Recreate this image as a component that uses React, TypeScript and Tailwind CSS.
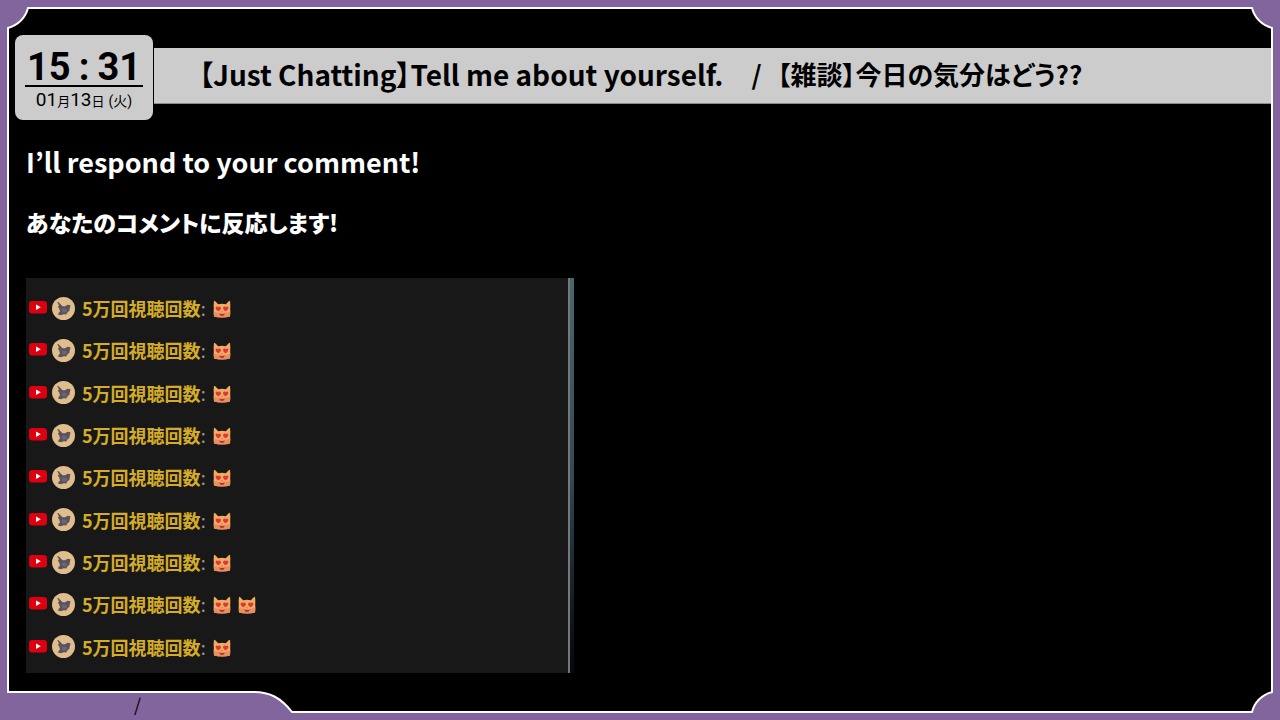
import type { ReactNode } from 'react'

type Message = {
  id: number
  author: string
  emotes: number
}

const MESSAGES: Message[] = [1, 1, 1, 1, 1, 1, 1, 2, 1].map((emotes, id) => ({
  id,
  author: '5万回視聴回数',
  emotes,
}))

export default function App() {
  return (
    <div className="relative flex min-h-screen flex-col bg-[#83659e] p-[7px] font-['Noto_Sans_CJK_JP',sans-serif]">
      <main className="flex flex-1 flex-col border-2 border-white bg-black pt-[26px] pb-[38px]">
        <header className="flex items-start pl-[6px]">
          <Clock />
          <Title />
        </header>

        <section className="flex flex-col gap-5 pt-[22px] pl-[17px] text-white">
          <p className="text-[27px] leading-10 font-bold">I’ll respond to your comment!</p>
          <p className="text-[23px] leading-10 font-black [font-feature-settings:'palt']">
            あなたのコメントに反応します!
          </p>
        </section>

        <ChatPanel />
      </main>

      <FrameCorners />
    </div>
  )
}

function Clock() {
  return (
    <div className="flex h-[85px] w-[138px] shrink-0 flex-col items-center rounded-lg bg-[#cccccc] px-[10px] pt-[14px] font-['Roboto','Noto_Sans_CJK_JP',sans-serif] text-black">
      <time className="flex h-[38px] w-full items-center justify-between border-b-2 border-black px-[2px] text-[38px] leading-9 font-bold">
        <span>15</span>
        <span>:</span>
        <span>31</span>
      </time>
      <p className="flex items-baseline text-[19px] leading-[26px]">
        01<Unit>月</Unit>13<Unit>日</Unit>
        <span className="pl-1 text-sm leading-6">(火)</span>
      </p>
    </div>
  )
}

function Unit({ children }: { children: ReactNode }) {
  return <span className="text-[13px] leading-6">{children}</span>
}

function Title() {
  return (
    <h1 className="mt-[13px] ml-px flex h-14 min-w-0 flex-1 items-center gap-7 border-b border-[#8c8c8c] bg-[#cccccc] pb-1 pl-[45px] font-bold whitespace-nowrap text-black [font-feature-settings:'palt']">
      <span className="text-[28px]">【Just Chatting】Tell me about yourself.</span>
      <span className="flex items-baseline gap-4 text-[26px]">
        <span>/</span>
        <span>【雑談】今日の気分はどう??</span>
      </span>
    </h1>
  )
}

function ChatPanel() {
  return (
    <section
      aria-label="Live chat"
      className="mt-9 ml-[17px] flex w-full max-w-[548px] flex-1 bg-[#181818]"
    >
      <ul className="grid flex-1 auto-rows-fr pt-[9px] pb-[5px]">
        {MESSAGES.map((message) => (
          <ChatRow key={message.id} message={message} />
        ))}
      </ul>
      <div className="w-[2px] bg-[#777777]" />
      <div className="w-1 bg-linear-to-b from-[#48686c] via-[#344856] to-[#05080c]" />
    </section>
  )
}

function ChatRow({ message }: { message: Message }) {
  return (
    <li className="flex items-center pl-[3px]">
      <YoutubeBadge />
      <Avatar />
      <span className="ml-[7px] text-lg leading-6 font-bold text-[#d4ac27]">{message.author}</span>
      <span className="mr-[7px] text-lg leading-6 text-[#999999]">:</span>
      <span className="flex gap-[7px]">
        {Array.from({ length: message.emotes }, (_, i) => (
          <HeartCat key={i} />
        ))}
      </span>
    </li>
  )
}

function YoutubeBadge() {
  return (
    <svg viewBox="0 0 18 14" className="h-[14px] w-[18px] shrink-0" aria-hidden="true">
      <rect width="18" height="12.5" rx="3.2" fill="#dd0010" />
      <path d="M7 3.5v5.4l4.8-2.7z" fill="#fff" />
    </svg>
  )
}

function Avatar() {
  return (
    <svg viewBox="0 0 23 23" className="ml-[5px] size-[23px] shrink-0" aria-hidden="true">
      <circle cx="11.5" cy="11.5" r="11.5" fill="#e0bd8c" />
      <path
        d="M5.2 5L6.6 5.2 10.5 9.3 13.2 9.2 15.5 7.8 18.5 8.2 17.8 11.3 17.4 13.8 15.6 15.3 14.2 17.6 11.8 17.2 8.8 18.3 6 17.6 6.6 16 8 14.6 7.3 11.8 5.8 9.4 7 8.6z"
        fill="#5a525d"
      />
      <path d="M10 11.500l3.500.3 2 1.200-1.400 2.600-2.600.2-1.500-1.600z" fill="#6c6471" />
    </svg>
  )
}

function HeartCat() {
  return (
    <svg viewBox="0 0 18 18" className="mt-[2px] size-[18px] shrink-0" aria-hidden="true">
      <path
        d="M1 .8Q1.6.4 5.2 4.2Q9 3.4 12.8 4.2Q16.4.4 17 .8Q17.6 5 17.2 9Q17.8 14 17 16.5Q14 17.5 9 17.5T1 16.5Q.2 14 .8 9Q.4 5 1 .8z"
        fill="#f0ad5c"
      />
      <path d="M1 12Q9 14 17 12V16.5Q14 17.5 9 17.5T1 16.5z" fill="#ea8d60" />
      <path
        d="M5.6 11.3C2.2 9.6 2 6.6 3.8 6.4c1 0 1.5.8 1.5.8s.8-.9 1.7-.5c1.7.8 1.2 3-1.4 4.6zM12.4 11.3C9.8 9.7 9.3 7.5 11 6.7c.9-.4 1.7.5 1.7.5s.5-.8 1.5-.8c1.8.2 1.6 3.2-1.8 4.9z"
        fill="#df3347"
      />
      <path d="M8 11.6h2L9 12.6z" fill="#c9464a" />
      <path d="M6.2 13.4Q9 14.4 11.8 13.4Q11.3 16 9 16T6.2 13.4z" fill="#b5303f" />
    </svg>
  )
}

// Notched corners of the frame, plus the raised tab at the bottom left.
function FrameCorners() {
  return (
    <>
      <Corner className="absolute top-0 left-0 size-[30px]" />
      <Corner className="absolute top-0 right-0 size-[30px] -scale-x-100" />
      <Corner className="absolute right-0 bottom-0 size-[30px] -scale-100" />
      <footer className="absolute bottom-0 left-0 h-[30px] w-[296px]">
        <svg viewBox="0 0 296 30" className="size-full" aria-hidden="true">
          <path d="M0 0H7V2H254Q278 2 292 22V30H0z" fill="#83659e" />
          <path d="M8 0V2H254C270 2 281 8 292 22H296" fill="none" stroke="#fff" strokeWidth="2" />
        </svg>
        <span className="absolute top-1 left-[134px] text-lg leading-5 text-black">/</span>
      </footer>
    </>
  )
}

function Corner({ className }: { className: string }) {
  return (
    <svg viewBox="0 0 30 30" className={className} aria-hidden="true">
      <path d="M0 0H30V7H28Q24 24 7 28V30H0z" fill="#83659e" />
      <path d="M30 8H28Q24 23 8 28V30" fill="none" stroke="#fff" strokeWidth="2" />
    </svg>
  )
}
